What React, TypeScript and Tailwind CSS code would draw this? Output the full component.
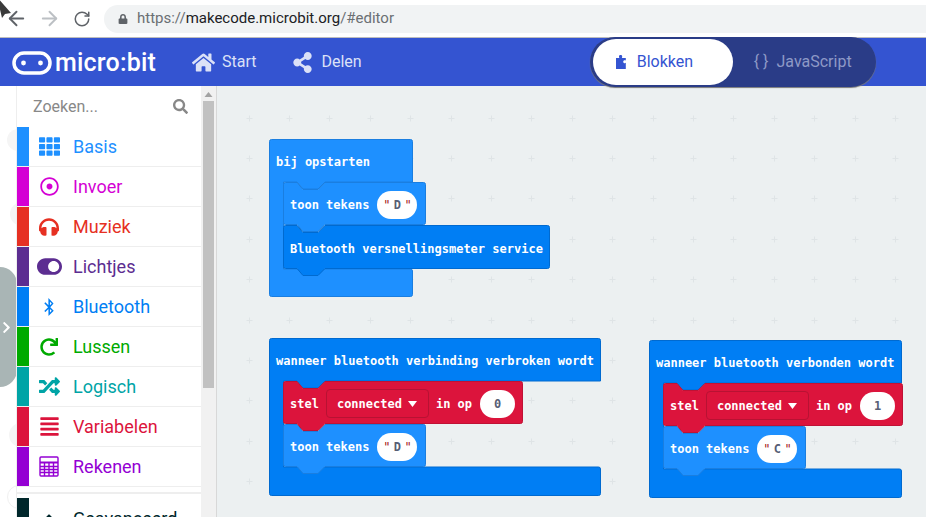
import type { ReactNode } from "react"
import { FaAlignJustify, FaBluetoothB, FaChevronRight, FaChevronUp, FaHeadphones, FaHome, FaLock, FaRandom, FaRedo, FaRegDotCircle, FaSearch, FaShareAlt, FaTh, FaToggleOn } from "react-icons/fa"
import { ArrowLeft, ArrowRight, RotateCw } from "lucide-react"

const stackPath = (w: number, h: number) =>
  `M.5,2.5 a2,2 0 0 1 2,-2 H14 l6,7 H35 l7,-7 H${w - 2.5} a2,2 0 0 1 2,2 V${h - 2.5} a2,2 0 0 1 -2,2 H42 l-7,7 H20 l-6,-7 H2.5 a2,2 0 0 1 -2,-2 z`

const hatPath = (w: number, arm: number, foot: number, h: number) =>
  `M.5,2.5 a2,2 0 0 1 2,-2 H${w - 2.5} a2,2 0 0 1 2,2 V${arm} H56 l-7,7 H34 l-6,-7 H14.5 V${foot} H${w - 2.5} a2,2 0 0 1 2,2 V${h - 2.5} a2,2 0 0 1 -2,2 H2.5 a2,2 0 0 1 -2,-2 z`

// workspace grid of little plus marks
let plusMarks = ""
for (let i = 0; i < 18; i++) {
  for (let j = 0; j < 11; j++) {
    const x = Math.floor(32 + i * 40.4) + 0.5
    const y = Math.floor(32 + j * 40.4) + 0.5
    plusMarks += `M${x - 3} ${y}h6M${x} ${y - 3}v6`
  }
}

function Shape({ d, fill, stroke }: { d: string; fill: string; stroke: string }) {
  return (
    <svg className="absolute inset-0 h-full w-full overflow-visible">
      <path d={d} fill={fill} stroke={stroke} strokeWidth="1" />
    </svg>
  )
}

function Oval({ children }: { children: ReactNode }) {
  return (
    <span className="flex h-[28px] w-[35px] items-center justify-center rounded-full bg-white text-[#575e75]">{children}</span>
  )
}

function StringOval({ value }: { value: string }) {
  return (
    <span className="flex h-[28px] w-[40px] items-center justify-center gap-[1px] rounded-full bg-white text-[#575e75]">
      <span className="font-normal text-[#a31515]">"</span>
      <span className="w-[12px] text-center">{value}</span>
      <span className="font-normal text-[#a31515]">"</span>
    </span>
  )
}

function ToonTekens({ value }: { value: string }) {
  return (
    <div className="relative z-[1] h-[43px] w-[143px]">
      <Shape d={stackPath(143, 43)} fill="#1e90ff" stroke="#1a7ee0" />
      <div className="relative flex h-full items-center gap-[8px] pl-[7px] pt-[2px]">
        <span>toon tekens</span>
        <StringOval value={value} />
      </div>
    </div>
  )
}

function SetConnected({ value }: { value: string }) {
  return (
    <div className="relative z-[2] h-[43px] w-[240px]">
      <Shape d={stackPath(240, 43)} fill="#dc143c" stroke="#c01235" />
      <div className="relative flex h-full items-center pl-[7px] pt-[2px]">
        <span>stel</span>
        <span className="ml-[7px] flex h-[29px] w-[103px] items-center gap-[6px] rounded-[4px] border border-[#b81233] pl-[10px]">
          connected
          <svg width="9" height="6" viewBox="0 0 9 6">
            <path d="M0 0h9L4.500 6z" fill="#fff" />
          </svg>
        </span>
        <span className="ml-[7px]">in op</span>
        <span className="ml-[8px]">
          <Oval>{value}</Oval>
        </span>
      </div>
    </div>
  )
}

function BluetoothService() {
  return (
    <div className="relative z-[2] h-[44px] w-[267px]">
      <Shape d={stackPath(267, 44)} fill="#007ef4" stroke="#006ad0" />
      <div className="relative flex h-full items-center pl-[7px] pt-[3px]">Bluetooth versnellingsmeter service</div>
    </div>
  )
}

const rows = [
  { label: "Basis", strip: "bg-[#1e90ff]", text: "text-[#1e90ff]", icon: <FaTh size={21} /> },
  { label: "Invoer", strip: "bg-[#d400d4]", text: "text-[#d400d4]", icon: <FaRegDotCircle size={19} /> },
  { label: "Muziek", strip: "bg-[#e63022]", text: "text-[#e63022]", icon: <FaHeadphones size={20} /> },
  { label: "Lichtjes", strip: "bg-[#5c2d91]", text: "text-[#5c2d91]", icon: <FaToggleOn size={25} /> },
  { label: "Bluetooth", strip: "bg-[#007ef4]", text: "text-[#007ef4]", icon: <FaBluetoothB size={18} /> },
  { label: "Lussen", strip: "bg-[#00aa00]", text: "text-[#00aa00]", icon: <FaRedo size={18} /> },
  { label: "Logisch", strip: "bg-[#00a4a6]", text: "text-[#00a4a6]", icon: <FaRandom size={21} /> },
  { label: "Variabelen", strip: "bg-[#dc143c]", text: "text-[#dc143c]", icon: <FaAlignJustify size={21} /> },
  {
    label: "Rekenen",
    strip: "bg-[#9400d3]",
    text: "text-[#9400d3]",
    icon: (
      <svg width="20" height="21" viewBox="0 0 20 21" fill="none" stroke="currentColor" strokeWidth="1.4">
        <rect x="1" y="1" width="18" height="19" rx="1" />
        <path d="M1 6.5h18" strokeWidth="2" />
        <path d="M1 10.5h18M1 13.5h18M1 16.5h18M5.5 7v13M10 7v13M14.5 7v13" />
      </svg>
    ),
  },
]

export default function App() {
  return (
    <div className="relative flex h-[517px] w-[926px] flex-col overflow-hidden bg-white font-['Roboto',sans-serif]">
      {/* mouse pointer from the capture */}
      <svg className="absolute left-0 top-0 z-20" width="12" height="18" viewBox="0 0 12 18">
        <path d="M-3 -3 L11 13 L5 14 L2 18 Z" fill="#3a3a3a" />
      </svg>

      {/* browser toolbar */}
      <div className="flex h-[38px] shrink-0 items-center border-b border-[#bdbdbd] pl-[5px]">
        <ArrowLeft size={23} className="text-[#5f6368]" />
        <ArrowRight size={23} className="ml-[10px] text-[#bcc0c4]" />
        <RotateCw size={18} className="ml-[12px] text-[#5f6368]" />
        <div className="ml-[13px] flex h-[28px] flex-1 items-center rounded-l-full bg-[#f1f3f4] pl-[14px] text-[15px] text-[#6b6f73]">
          <FaLock size={10} className="mr-[9px] text-[#5f6368]" />
          <span>https://</span>
          <span className="text-[#202124]">makecode.microbit.org</span>
          <span>/#editor</span>
        </div>
      </div>

      {/* editor header */}
      <div className="flex h-[48px] shrink-0 items-center bg-[#3454d1] pl-[12px] text-[16px] text-[#dbe1f7]">
        <svg width="40" height="24" viewBox="0 0 40 24" fill="none" className="mt-[1px]">
          <rect x="2" y="2" width="36" height="20" rx="10" stroke="#fff" strokeWidth="3.5" />
          <circle cx="11.5" cy="12" r="2.4" fill="#fff" />
          <circle cx="28.5" cy="12" r="2.4" fill="#fff" />
        </svg>
        <span className="ml-[3px] w-[104px] text-[25px] font-medium leading-none tracking-[0.2px] text-white">micro:bit</span>
        <FaHome size={23} className="ml-[33px]" />
        <span className="ml-[7px]">Start</span>
        <FaShareAlt size={21} className="ml-[36px]" />
        <span className="ml-[8px]">Delen</span>
        <div className="relative z-10 ml-[228px] flex h-[50px] w-[286px] items-center rounded-full bg-[#2a3c87] pl-[3px] shadow-[0_1px_1px_#777]">
          <div className="flex h-[46px] w-[140px] items-center rounded-full bg-white pl-[23px] text-[#3454d1]">
            <svg width="11" height="14" viewBox="0 0 11 14">
              <path d="M0 3h3.4C3 2.4 3 1.800 3 1.400 3 .5 3.800 0 4.600 0s1.600.5 1.600 1.400c0 .4 0 1-.4 1.600H9.800v2.600c-.4-.3-.8-.4-1.100-.4-.9 0-1.500.7-1.500 1.500s.6 1.500 1.500 1.500c.3 0 .7-.1 1.100-.4V14H0z" fill="#3454d1" />
            </svg>
            <span className="ml-[10px]">Blokken</span>
          </div>
          <span className="ml-[21px] text-[#8e99c6]">{"{ }"}</span>
          <span className="ml-[8px] text-[#8e99c6]">JavaScript</span>
        </div>
      </div>

      <div className="flex min-h-0 flex-1">
        {/* simulator edge */}
        <div className="relative w-[17px] shrink-0 overflow-hidden border-r border-[#eeeeee]">
          <div className="absolute left-[7px] top-[43px] h-[22px] w-[22px] rounded-full bg-[#f5f5f5]" />
          <div className="absolute left-[10px] top-[116px] h-[24px] w-[24px] rounded-full bg-[#f5f5f5]" />
          <div className="absolute left-[9px] top-[337px] h-[24px] w-[24px] rounded-full bg-[#f5f5f5]" />
          <div className="absolute left-[7px] top-[399px] h-[24px] w-[24px] rounded-full border border-[#f0f0f0]" />
          <div className="absolute left-0 top-[181px] flex h-[120px] w-[17px] items-center rounded-r-[17px] bg-[#a9b5b5] text-white">
            <FaChevronRight size={13} />
          </div>
        </div>

        {/* toolbox */}
        <div className="w-[184px] shrink-0 overflow-hidden">
          <div className="flex h-[41px] items-center justify-between pl-[16px] pr-[13px] text-[16px] text-[#888888]">
            <span>Zoeken...</span>
            <FaSearch size={15} />
          </div>
          {rows.map((row) => (
            <div key={row.label} className={`flex h-[40px] items-center border-b border-[#eeeeee] text-[18px] ${row.text}`}>
              <span className={`h-full w-[12px] shrink-0 ${row.strip}`} />
              <span className="flex w-[40px] shrink-0 justify-center">{row.icon}</span>
              <span className="ml-[4px]">{row.label}</span>
            </div>
          ))}
          <div className="mt-[5px] border-t-2 border-[#eeeeee] pt-[4px]">
            <div className="flex h-[40px] items-center text-[18px] text-[#00272b]">
              <span className="h-full w-[12px] shrink-0 bg-[#00272b]" />
              <span className="flex w-[40px] shrink-0 justify-center">
                <FaChevronUp size={14} />
              </span>
              <span className="ml-[4px]">Geavanceerd</span>
            </div>
          </div>
        </div>

        {/* toolbox scrollbar */}
        <div className="w-[16px] shrink-0 border-r border-[#d8d8d8] bg-[#f1f1f1] pl-[2px] pt-[6px]">
          <svg width="11" height="5" viewBox="0 0 11 5" className="mb-[4px]">
            <path d="M1.500 5L5.500 0l4 5z" fill="#a3a3a3" />
          </svg>
          <div className="h-[287px] w-[11px] bg-[#c1c1c1]" />
        </div>

        {/* workspace */}
        <div className="relative min-w-0 flex-1 overflow-hidden bg-[#ecf0f1] font-['DejaVu_Sans_Mono',monospace] text-[12px] font-bold text-white">
          <svg className="absolute inset-0 h-full w-full">
            <path d={plusMarks} stroke="#dfe4e6" strokeWidth="1" />
          </svg>

          {/* bij opstarten */}
          <div className="absolute left-[52px] top-[53px] h-[158px] w-[144px]">
            <Shape d={hatPath(144, 43, 130, 158)} fill="#1e90ff" stroke="#1a7ee0" />
            <div className="relative flex h-[43px] items-center pl-[7px] pt-[2px]">bij opstarten</div>
            <div className="relative flex flex-col pl-[14px]">
              <ToonTekens value="D" />
              <BluetoothService />
            </div>
          </div>

          {/* wanneer bluetooth verbinding verbroken wordt */}
          <div className="absolute left-[52px] top-[252px] h-[158px] w-[332px]">
            <Shape d={hatPath(332, 43, 129, 158)} fill="#007ef4" stroke="#006ad0" />
            <div className="relative flex h-[43px] items-center pl-[7px] pt-[2px]">wanneer bluetooth verbinding verbroken wordt</div>
            <div className="relative flex flex-col pl-[14px]">
              <SetConnected value="0" />
              <ToonTekens value="D" />
            </div>
          </div>

          {/* wanneer bluetooth verbonden wordt */}
          <div className="absolute left-[432px] top-[254px] h-[158px] w-[253px]">
            <Shape d={hatPath(253, 43, 129, 158)} fill="#007ef4" stroke="#006ad0" />
            <div className="relative flex h-[43px] items-center pl-[7px] pt-[2px]">wanneer bluetooth verbonden wordt</div>
            <div className="relative flex flex-col pl-[14px]">
              <SetConnected value="1" />
              <ToonTekens value="C" />
            </div>
          </div>
        </div>
      </div>
    </div>
  )
}
